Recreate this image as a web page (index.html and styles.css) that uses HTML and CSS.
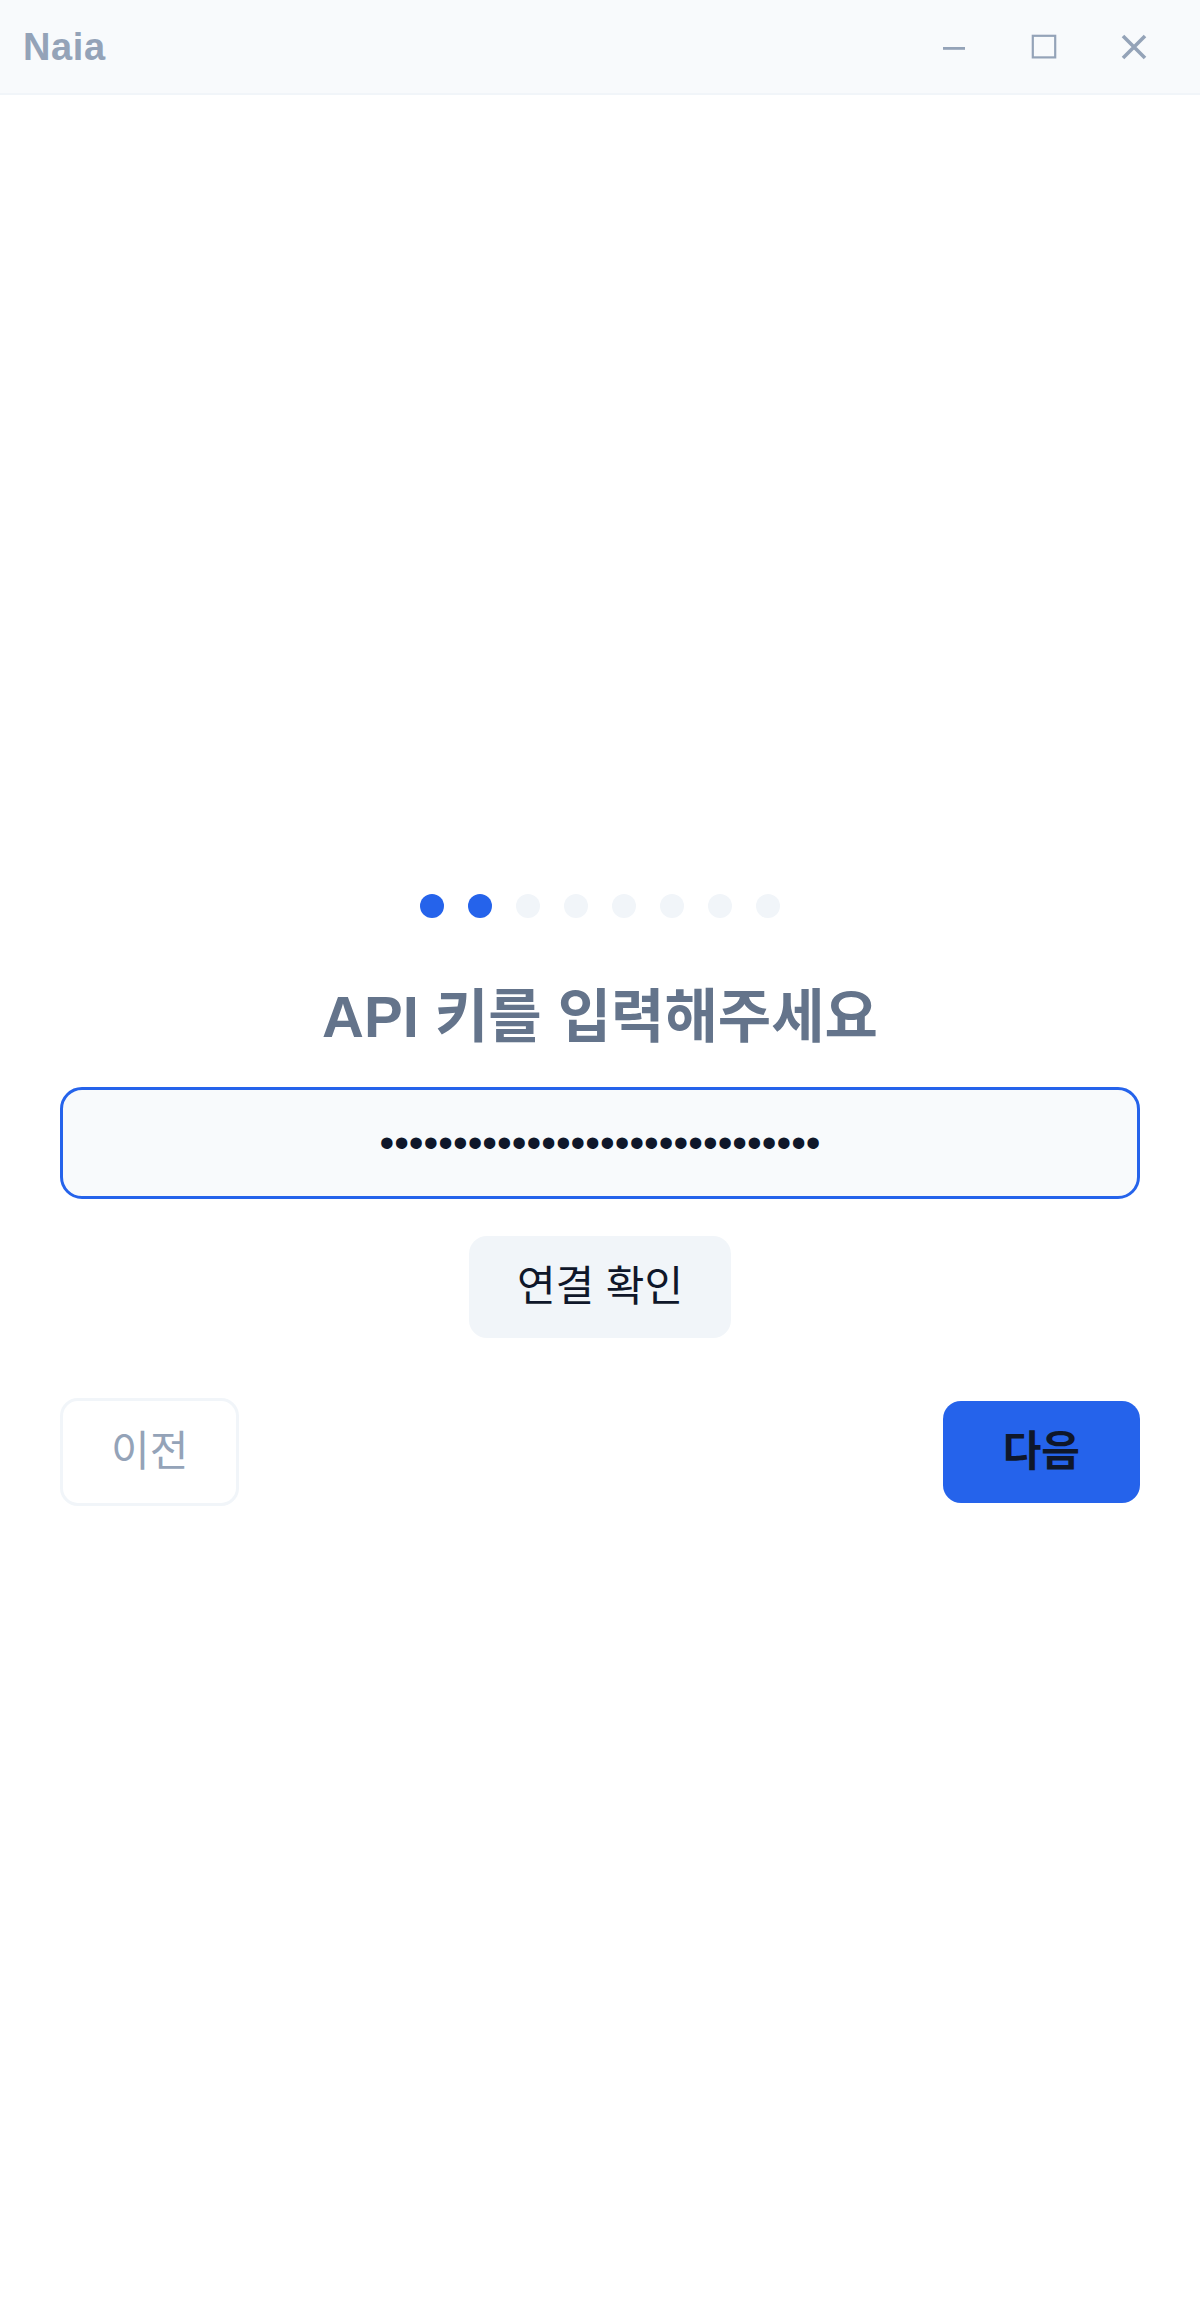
FILE: index.html
```html
<!DOCTYPE html>
<html lang="ko">
<head>
<meta charset="utf-8">
<title>Naia</title>
<link rel="stylesheet" href="styles.css">
</head>
<body>
<div class="app">
  <header class="titlebar">
    <span class="app-name">Naia</span>
    <div class="win-controls">
      <button class="win-btn" aria-label="최소화">
        <svg width="24" height="24" viewBox="0 0 24 24"><rect x="1" y="12" width="22" height="2.8" fill="#94a3b8"/></svg>
      </button>
      <button class="win-btn" aria-label="최대화">
        <svg width="26" height="26" viewBox="0 0 26 26"><rect x="1.8" y="1.8" width="22.4" height="21.6" fill="none" stroke="#94a3b8" stroke-width="2.2"/></svg>
      </button>
      <button class="win-btn" aria-label="닫기">
        <svg width="26" height="26" viewBox="0 0 26 26"><path d="M2 2 L24 24 M24 2 L2 24" stroke="#94a3b8" stroke-width="3.6"/></svg>
      </button>
    </div>
  </header>
  <main class="content">
    <div class="steps">
      <span class="step active"></span>
      <span class="step active"></span>
      <span class="step"></span>
      <span class="step"></span>
      <span class="step"></span>
      <span class="step"></span>
      <span class="step"></span>
      <span class="step"></span>
    </div>
    <h1 class="heading">API 키를 입력해주세요</h1>
    <input class="key-input" type="password" value="sk-abcdefghijklmnopqrstuvwxyz1">
    <button class="btn btn-secondary check-btn">연결 확인</button>
    <div class="nav-row">
      <button class="btn btn-outline">이전</button>
      <button class="btn btn-primary">다음</button>
    </div>
  </main>
</div>
</body>
</html>
```

FILE: styles.css
```css
html, body {
  margin: 0;
  padding: 0;
  background: #ffffff;
}

body {
  font-family: "Liberation Sans", "Noto Sans CJK KR", sans-serif;
}

.app {
  display: flex;
  flex-direction: column;
  min-height: 2304px;
}

.titlebar {
  height: 93px;
  background: #f8fafc;
  border-bottom: 2px solid #f1f5f9;
  display: flex;
  align-items: center;
  justify-content: space-between;
  padding: 0 21px 0 23px;
  flex-shrink: 0;
}

.app-name {
  font-size: 38px;
  font-weight: 700;
  color: #94a3b8;
  letter-spacing: 0.6px;
  padding-top: 2px;
}

.win-controls {
  display: flex;
  height: 100%;
}

.win-btn {
  width: 90px;
  height: 93px;
  border: 0;
  background: transparent;
  padding: 0;
  display: flex;
  align-items: center;
  justify-content: center;
}

.content {
  flex: 1;
  display: flex;
  flex-direction: column;
  align-items: center;
  justify-content: center;
  padding: 0 60px;
}

.steps {
  display: flex;
  gap: 24px;
}

.step {
  width: 24px;
  height: 24px;
  border-radius: 50%;
  background: #f1f5f9;
}

.step.active {
  background: #2563eb;
}

.heading {
  margin: 67px 0 0;
  font-size: 58px;
  line-height: 64px;
  font-weight: 700;
  color: #64748b;
  text-align: center;
}

.key-input {
  margin-top: 38px;
  box-sizing: border-box;
  width: 100%;
  height: 112px;
  border: 3px solid #2563eb;
  border-radius: 22px;
  background: #f8fafc;
  outline: none;
  text-align: center;
  font-family: "Liberation Sans", sans-serif;
  font-size: 42px;
  color: #0f172a;
  padding: 0 20px;
}

.btn {
  font-family: "Liberation Sans", "Noto Sans CJK KR", sans-serif;
  font-size: 42px;
  line-height: 54px;
  border-radius: 18px;
  border: 0;
  padding: 24px 48px;
  cursor: pointer;
}

.btn-secondary {
  background: #f1f5f9;
  color: #0f172a;
}

.check-btn {
  margin-top: 37px;
}

.nav-row {
  margin-top: 60px;
  width: 100%;
  display: flex;
  justify-content: space-between;
  align-items: center;
}

.btn-outline {
  background: #ffffff;
  border: 3px solid #f1f5f9;
  color: #94a3b8;
}

.btn-primary {
  background: #2563eb;
  color: #0f172a;
  font-weight: 700;
  padding: 24px 60px;
}
```
